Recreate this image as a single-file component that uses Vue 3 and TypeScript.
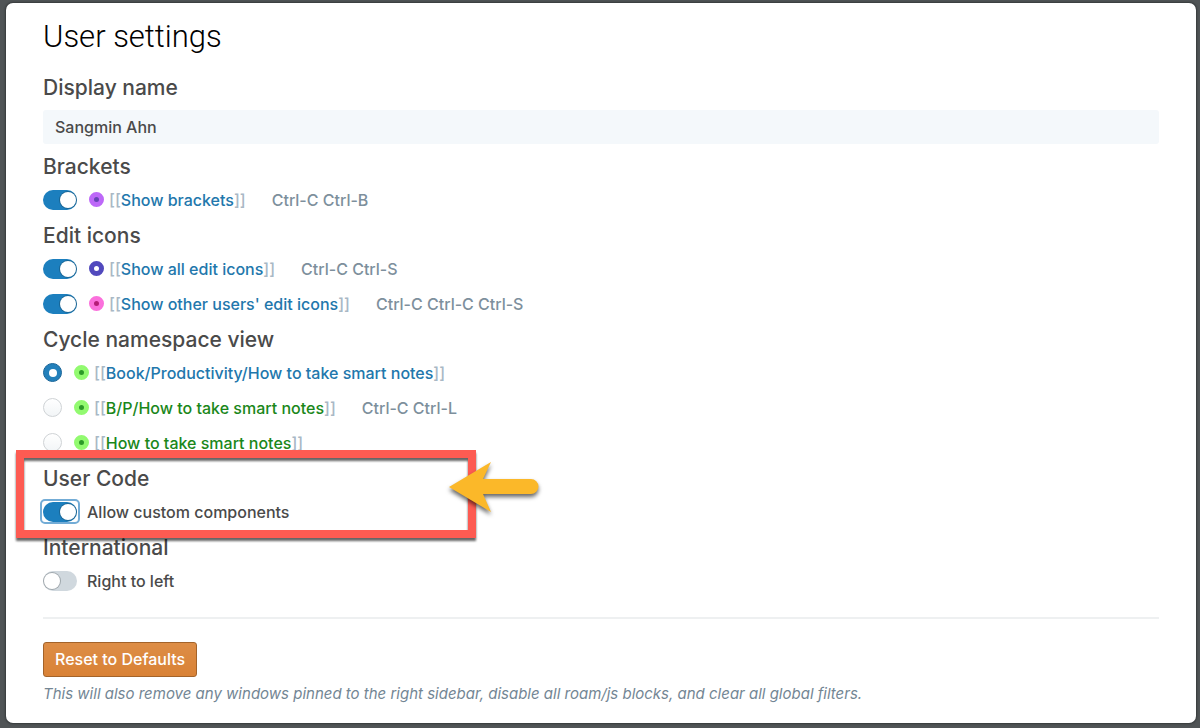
<script setup lang="ts">
import { reactive, ref } from 'vue'

interface ToggleRow {
  id: string
  tag: string
  shortcut: string
  dot: string
  on: boolean
}
interface ToggleGroup {
  title: string
  rows: ToggleRow[]
}
interface ViewOption {
  id: string
  tag: string
  shortcut: string
  tone: string
}

const displayName = ref('Sangmin Ahn')
const groups = reactive<ToggleGroup[]>([
  {
    title: 'Brackets',
    rows: [{ id: 'brackets', tag: 'Show brackets', shortcut: 'Ctrl-C Ctrl-B', dot: 'violet', on: true }],
  },
  {
    title: 'Edit icons',
    rows: [
      { id: 'all-icons', tag: 'Show all edit icons', shortcut: 'Ctrl-C Ctrl-S', dot: 'indigo', on: true },
      { id: 'other-icons', tag: "Show other users' edit icons", shortcut: 'Ctrl-C Ctrl-C Ctrl-S', dot: 'pink', on: true },
    ],
  },
])
const views: ViewOption[] = [
  { id: 'full', tag: 'Book/Productivity/How to take smart notes', shortcut: '', tone: 'blue' },
  { id: 'partial', tag: 'B/P/How to take smart notes', shortcut: 'Ctrl-C Ctrl-L', tone: 'green' },
  { id: 'short', tag: 'How to take smart notes', shortcut: '', tone: 'green' },
]
const view = ref('full')
const customComponents = ref(true)
const rightToLeft = ref(false)

function resetDefaults(): void {
  groups.forEach((g) => g.rows.forEach((r) => (r.on = true)))
  view.value = 'full'
  customComponents.value = false
  rightToLeft.value = false
}
</script>

<template>
  <div class="backdrop">
    <main class="dialog">
      <h1>User settings</h1>

      <section class="name">
        <h2><label for="display-name">Display name</label></h2>
        <input id="display-name" v-model="displayName" class="text-field" type="text" />
      </section>

      <section v-for="g in groups" :key="g.title">
        <h2>{{ g.title }}</h2>
        <div v-for="r in g.rows" :key="r.id" class="row">
          <input :id="r.id" v-model="r.on" class="switch" type="checkbox" />
          <label :for="r.id" class="tag">
            <span class="dot" :class="r.dot"></span>
            <span><span class="bracket">[[</span><a href="#" class="blue">{{ r.tag }}</a><span class="bracket">]]</span></span>
          </label>
          <span class="shortcut">{{ r.shortcut }}</span>
        </div>
      </section>

      <section>
        <h2>Cycle namespace view</h2>
        <div v-for="v in views" :key="v.id" class="row">
          <input :id="v.id" v-model="view" class="radio" type="radio" name="namespace-view" :value="v.id" />
          <label :for="v.id" class="tag">
            <span class="dot lime"></span>
            <span><span class="bracket">[[</span><a href="#" :class="v.tone">{{ v.tag }}</a><span class="bracket">]]</span></span>
          </label>
          <span v-if="v.shortcut" class="shortcut">{{ v.shortcut }}</span>
        </div>
      </section>

      <section class="user-code">
        <h2>User Code</h2>
        <div class="row">
          <input id="custom" v-model="customComponents" class="switch" type="checkbox" />
          <label for="custom" class="plain">Allow custom components</label>
          <span class="focus-ring"></span>
        </div>
        <div class="callout"></div>
        <svg class="arrow" viewBox="0 0 100 60" aria-hidden="true">
          <path d="M4 29 L46 4 L38 21 H86 A7.5 7.5 0 0 1 86 36 H38 L46 54 Z" fill="#fbb829" />
        </svg>
      </section>

      <section>
        <h2>International</h2>
        <div class="row">
          <input id="rtl" v-model="rightToLeft" class="switch" type="checkbox" />
          <label for="rtl" class="plain">Right to left</label>
        </div>
      </section>

      <hr />
      <button type="button" class="reset" @click="resetDefaults">Reset to Defaults</button>
      <p class="note">This will also remove any windows pinned to the right sidebar, disable all roam/js blocks, and clear all global filters.</p>
    </main>
  </div>
</template>

<style>
body {
  margin: 0;
  background: #505456;
}
</style>

<style scoped>
.backdrop {
  box-sizing: border-box;
  min-height: 100vh;
  padding: 3px 4px 5px 6px;
  background: #505456;
  display: flex;
  font-family: Inter, "Liberation Sans", sans-serif;
  font-size: 16px;
  font-weight: 450;
  line-height: 20px;
  color: #4a4a4a;
}
.dialog {
  box-sizing: border-box;
  flex: 1;
  padding: 15px 37px 16px;
  border-radius: 7px;
  background: #fff;
  box-shadow: 0 0 2px 1px #35393b;
}
h1 {
  margin: 0 0 15px;
  font-family: Roboto, Inter, sans-serif;
  font-size: 31px;
  line-height: 38px;
  font-weight: 300;
  color: #000;
}
section {
  padding-bottom: 2px;
}
h2 {
  margin: 0;
  padding-top: 2px;
  font-size: 21px;
  line-height: 30px;
  font-weight: 550;
}
.name {
  margin-bottom: 4px;
}
.text-field {
  box-sizing: border-box;
  display: block;
  width: 100%;
  height: 34px;
  margin-top: 7px;
  padding: 0 12px;
  border: 0;
  border-radius: 3px;
  background: #f4f8fb;
  color: #4a4a4a;
  font: inherit;
}
.row {
  position: relative;
  display: flex;
  align-items: center;
  height: 35px;
}
.switch,
.radio {
  appearance: none;
  box-sizing: border-box;
  flex: none;
  display: flex;
  align-items: center;
  margin: 0;
}
.switch {
  width: 34px;
  height: 20px;
  padding: 0 1px;
  border-radius: 10px;
  background: #d0d8de;
}
.switch::before {
  content: "";
  width: 16px;
  height: 16px;
  border-radius: 50%;
  background: #fff;
  box-shadow: 0 0 0 1px rgba(16, 22, 26, 0.25);
}
.switch:checked {
  justify-content: flex-end;
  background: #1c7fbe;
}
.focus-ring {
  position: absolute;
  top: 5px;
  left: -3px;
  box-sizing: border-box;
  width: 40px;
  height: 25px;
  border: 2px solid #73acd6;
  border-radius: 5px;
  pointer-events: none;
}
.radio {
  justify-content: center;
  width: 19px;
  height: 19px;
  border: 1px solid #cfd3d6;
  border-radius: 50%;
  background: linear-gradient(#fff, #f2f5f7);
}
.radio:checked {
  border-color: #1b6699;
  background: #2380bb;
}
.radio:checked::before {
  content: "";
  width: 8px;
  height: 8px;
  border-radius: 50%;
  background: #fff;
}
.tag {
  display: flex;
  align-items: center;
  gap: 5px;
  margin-left: 12px;
}
.plain {
  margin-left: 10px;
}
.dot {
  box-sizing: border-box;
  width: 15px;
  height: 15px;
  border: 5px solid;
  border-radius: 50%;
}
.violet {
  border-color: #bd68f8;
  background: #6544b5;
}
.indigo {
  border-color: #5149bd;
  background: #fff;
}
.pink {
  border-color: #fb70dc;
  background: #b51c78;
}
.lime {
  border-color: #92fa70;
  background: #2c9a28;
}
.bracket {
  color: #a9b8c5;
}
a {
  text-decoration: none;
}
.blue {
  color: #2277ac;
}
.green {
  color: #1a871a;
}
.shortcut {
  margin-left: 26px;
  color: #7d8f9c;
}
.user-code {
  position: relative;
}
.callout {
  position: absolute;
  z-index: 1;
  top: -12px;
  left: -27px;
  box-sizing: border-box;
  width: 460px;
  height: 88px;
  border: 8px solid #fd5b52;
  filter: drop-shadow(0 3px 1px rgba(0, 0, 0, 0.6));
  pointer-events: none;
}
.arrow {
  position: absolute;
  z-index: 2;
  top: -4px;
  left: 402px;
  width: 100px;
  height: 60px;
  filter: drop-shadow(0 3px 2px rgba(0, 0, 0, 0.6));
  pointer-events: none;
}
hr {
  height: 2px;
  margin: 17px 0 23px;
  border: 0;
  background: #eef0f1;
}
.reset {
  display: block;
  height: 35px;
  padding: 0 11px 1px;
  border: 1px solid #a3632a;
  border-radius: 3px;
  background: linear-gradient(#dd8d46, #d98236);
  color: #fff;
  font: inherit;
}
.note {
  margin: 7px 0 0;
  font-size: 15px;
  font-style: italic;
  color: #738694;
}
</style>
